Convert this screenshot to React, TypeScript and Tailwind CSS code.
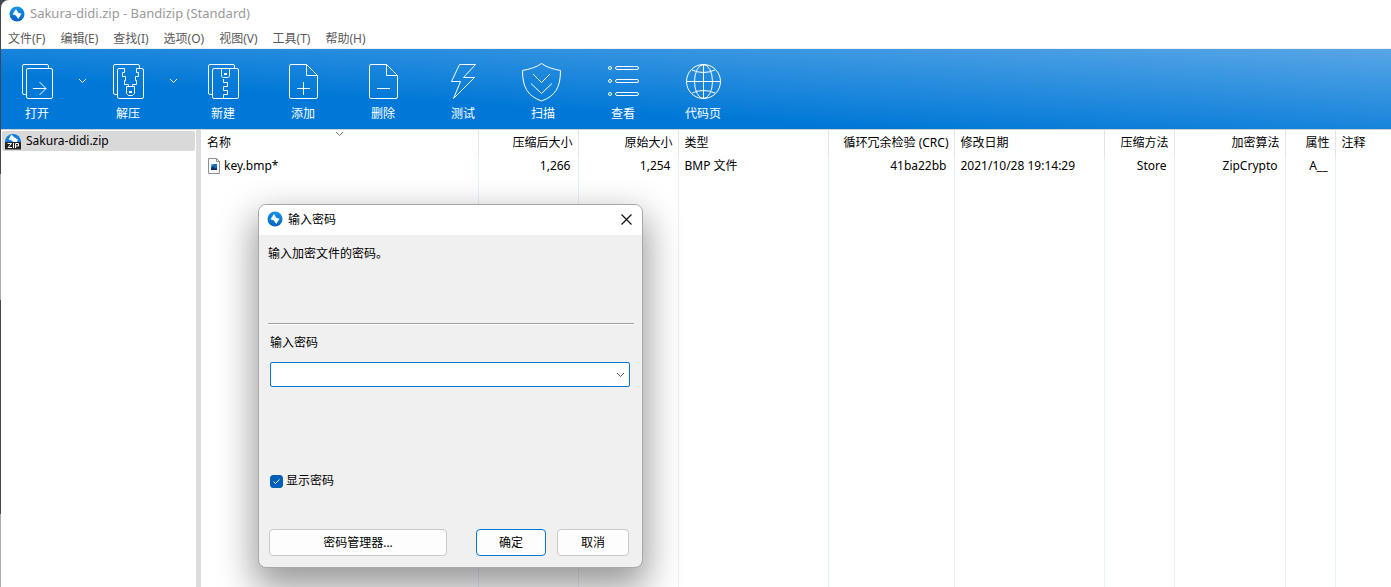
import { useState } from 'react'
import type { ReactNode } from 'react'
import clsx from 'clsx'

const menus = ['文件(F)', '编辑(E)', '查找(I)', '选项(O)', '视图(V)', '工具(T)', '帮助(H)']

const columns = [
  { name: '名称', value: 'key.bmp*', width: 'w-[277px]' },
  { name: '压缩后大小', value: '1,266', width: 'w-[100px]', right: true },
  { name: '原始大小', value: '1,254', width: 'w-[100px]', right: true },
  { name: '类型', value: 'BMP 文件', width: 'w-[150px]' },
  { name: '循环冗余检验 (CRC)', value: '41ba22bb', width: 'w-[126px]', right: true },
  { name: '修改日期', value: '2021/10/28 19:14:29', width: 'w-[150px]' },
  { name: '压缩方法', value: 'Store', width: 'w-[70px]', right: true },
  { name: '加密算法', value: 'ZipCrypto', width: 'w-[111px]', right: true },
  { name: '属性', value: 'A__', width: 'w-[50px]', right: true },
  { name: '注释', value: '', width: '' },
]

const pages = 'M9.5 32.5H7a1.5 1.5 0 0 1-1.5-1.5V4A1.5 1.5 0 0 1 7 2.5H30A1.5 1.5 0 0 1 31.5 4V6.5'
const sheet = 'M23.5 2.5H8A1.5 1.5 0 0 0 6.5 4V35A1.5 1.5 0 0 0 8 36.5H33A1.5 1.5 0 0 0 34.5 35V13.5L23.5 2.5V13.5H34.5'

const tools: { label: string; menu?: boolean; icon: ReactNode }[] = [
  {
    label: '打开',
    menu: true,
    icon: (
      <>
        <path d={pages} />
        <rect x="9.5" y="6.5" width="26" height="30" rx="1.5" />
        <path d="M16 26.5H29M22.5 20L29 26.5L22.5 33" />
      </>
    ),
  },
  {
    label: '解压',
    menu: true,
    icon: (
      <>
        <path d={pages} />
        <path d="M20.5 24.5V22.5H16.5V18.5H17.5V14.5H14.5V10.5H16.5V6.5H11A1.5 1.5 0 0 0 9.5 8V35A1.5 1.5 0 0 0 11 36.5H34A1.5 1.5 0 0 0 35.5 35V8A1.5 1.5 0 0 0 34 6.5H28.5V10.5H30.5V14.5H27.5V18.5H28.5V22.5H24.5V24.5" />
        <path d="M18.5 24.5H26.5V31.5L24.5 33.5H20.5L18.5 31.5Z" />
        <rect x="21.5" y="29.5" width="2" height="1" />
      </>
    ),
  },
  {
    label: '新建',
    icon: (
      <>
        <path d={pages} />
        <rect x="9.5" y="6.5" width="26" height="30" rx="1.5" />
        <path d="M18.5 6.5V13A2 2 0 0 0 20.5 15.5H24.5A2 2 0 0 0 26.5 13V6.5" />
        <rect x="21.5" y="11.5" width="2" height="1" />
        <path d="M20.5 17V20.5H24.5V24.5H20.5V28.5H24.5V32.5H20.5V36.5" />
      </>
    ),
  },
  {
    label: '添加',
    icon: (
      <>
        <path d={sheet} />
        <path d="M14 26.5H27M20.5 20V33" />
      </>
    ),
  },
  {
    label: '删除',
    icon: (
      <>
        <path d={sheet} />
        <path d="M14 26.5H27" />
      </>
    ),
  },
  { label: '测试', icon: <path d="M16.5 2.5H32.5L20.5 15.5H31.5L10.5 36.5L17.5 19.5H8.5Z" /> },
  {
    label: '扫描',
    icon: (
      <>
        <path d="M18.5 1.5C13 5.5 7 7 -.5 8.5C-.5 26 5 34 18.5 39C32 34 37.5 26 37.5 8.5C30 7 24 5.5 18.5 1.5Z" />
        <path d="M10 12L18.5 20.5L27 12M8 21.5L18.5 31.5L29 21.5" />
      </>
    ),
  },
  {
    label: '查看',
    icon: (
      <>
        {[6, 19, 32].map((y) => (
          <g key={y}>
            <circle cx="7" cy={y} r="1.5" />
            <rect x="12.5" y={y - 1.5} width="23" height="3" rx="1.5" />
          </g>
        ))}
      </>
    ),
  },
  {
    label: '代码页',
    icon: (
      <>
        <circle cx="20.5" cy="19.5" r="17" />
        <ellipse cx="20.5" cy="19.5" rx="9" ry="17" />
        <path d="M20.5 2.5V36.5M3.5 19.5H37.5M9 8Q20.5 13 32 8M9 31Q20.5 26 32 31" />
      </>
    ),
  },
]

function Chevron({ className }: { className?: string }) {
  return (
    <svg viewBox="0 0 9 6" className={clsx('w-[9px] h-1.5', className)} fill="none" stroke="currentColor">
      <path d="M1 1L4.5 4.5L8 1" />
    </svg>
  )
}

function BandizipLogo() {
  return (
    <svg viewBox="0 0 16 16" className="w-4 h-4">
      <defs>
        <linearGradient id="logo" x1="0" y1="0" x2="0" y2="1">
          <stop offset="0" stopColor="#1596e8" />
          <stop offset="1" stopColor="#0560c8" />
        </linearGradient>
      </defs>
      <circle cx="8" cy="8" r="7.5" fill="url(#logo)" />
      <path d="M7 3L9.2 6.8L12.5 7.8L9.2 13L7 9.4L3.5 8.2Z" fill="#fff" />
    </svg>
  )
}

function ZipIcon() {
  return (
    <svg viewBox="0 0 16 17" className="w-4 h-[17px]">
      <path d="M0 9a8 8 0 0 1 16 0Z" fill="#0a7fe0" />
      <path d="M6.5 1.5L9.5 4.5L13 6.5L12 9H8L7 7.5L3.5 6.5Z" fill="#fff" />
      <rect y="9" width="16" height="7.5" rx="0.5" fill="#222" />
      <path d="M2.5 10.5H6.5L3 14.5H7M8.5 10V15M10.5 15V10.5H13.5V13H10.5" fill="none" stroke="#fff" />
    </svg>
  )
}

function BmpIcon() {
  return (
    <svg viewBox="0 0 12 16" className="w-3 h-4">
      <path d="M.5 .5H8.5L11.5 3.5V15.5H.5Z" fill="#f8f8f8" stroke="#8f8f8f" />
      <path d="M8.5 .5V3.5H11.5" fill="none" stroke="#8f8f8f" />
      <rect x="3" y="6" width="6" height="6" fill="#1668b8" />
      <path d="M3 12V10L5 8.5L7 10.5L9 9.5V12Z" fill="#0a2f66" />
      <path d="M3 6H6L3 9Z" fill="#4bb0ea" />
    </svg>
  )
}

function Toolbar() {
  return (
    <div
      role="toolbar"
      className="flex h-20 shrink-0 text-white bg-[linear-gradient(to_top_right,#0078d7_32%,#58a6e6)]"
    >
      {tools.map((tool) => (
        <div key={tool.label} className="flex">
          <button
            type="button"
            className={clsx('flex flex-col items-center pt-[13px] gap-0.5', tool.menu ? 'w-[72px]' : 'w-20')}
          >
            <svg viewBox="0 0 40 40" className="w-10 h-10 overflow-visible" fill="none" stroke="currentColor">
              {tool.icon}
            </svg>
            <span className="leading-5">{tool.label}</span>
          </button>
          {tool.menu && (
            <button type="button" aria-label={`${tool.label}菜单`} className="w-[19px] flex justify-center pt-[29px]">
              <Chevron />
            </button>
          )}
        </div>
      ))}
    </div>
  )
}

function FileList() {
  return (
    <table className="flex-1 h-full table-fixed border-collapse whitespace-nowrap">
      <thead>
        <tr className="h-[26px]">
          {columns.map((col, i) => (
            <th
              key={col.name}
              className={clsx(
                'relative p-0 font-normal leading-5 border-[#e5e5e5]',
                col.width,
                col.right ? 'text-right pr-[5px]' : 'text-left pl-1.5',
                i < columns.length - 1 && 'border-r'
              )}
            >
              {col.name}
              {i === 0 && <Chevron className="absolute top-px left-1/2 -ml-1 text-gray-500" />}
            </th>
          ))}
        </tr>
      </thead>
      <tbody>
        <tr className="h-5">
          {columns.map((col, i) => (
            <td
              key={col.name}
              className={clsx(
                'p-0 leading-5 border-[#e6f0fb]',
                col.right ? 'text-right pr-[7px]' : 'text-left pl-1.5',
                i < columns.length - 1 && 'border-r'
              )}
            >
              {i === 0 ? (
                <span className="flex items-center gap-1 pl-px">
                  <BmpIcon />
                  {col.value}
                </span>
              ) : (
                col.value
              )}
            </td>
          ))}
        </tr>
        <tr>
          {columns.map((col, i) => (
            <td key={col.name} className={clsx('p-0 border-[#e6f0fb]', i < columns.length - 1 && 'border-r')} />
          ))}
        </tr>
      </tbody>
    </table>
  )
}

function PasswordDialog() {
  const [password, setPassword] = useState('')
  const [visible, setVisible] = useState(true)

  return (
    <div
      role="dialog"
      aria-labelledby="dialog-title"
      className="absolute left-[258px] top-[204px] w-[385px] rounded-lg border border-[#a8a8a8] bg-[#f0f0f0] overflow-hidden shadow-[0_16px_36px_4px_rgba(0,0,0,0.4)]"
    >
      <div className="flex items-center h-[30px] pl-2 pr-2.5 pb-0.5 bg-white">
        <BandizipLogo />
        <h2 id="dialog-title" className="pl-[5px] pt-px flex-1">
          输入密码
        </h2>
        <button type="button" aria-label="关闭">
          <svg viewBox="0 0 11 11" className="w-[11px] h-[11px]" stroke="#111" strokeWidth="1.2">
            <path d="M.5 .5L10.5 10.5M10.5 .5L.5 10.5" />
          </svg>
        </button>
      </div>

      <form className="pl-[9px] pr-2 pt-[9px] pb-[11px]" onSubmit={(e) => e.preventDefault()}>
        <p className="leading-5">输入加密文件的密码。</p>
        <hr className="mt-[59px] border-t border-b border-t-[#a0a0a0] border-b-white" />

        <label htmlFor="password" className="block mt-2 pl-0.5 leading-5">
          输入密码
        </label>
        <div className="flex items-center h-[25px] mt-[9px] ml-0.5 mr-1 pr-1 rounded-xs border border-[#0078d4] bg-white">
          <input
            id="password"
            type={visible ? 'text' : 'password'}
            value={password}
            onChange={(e) => setPassword(e.target.value)}
            className="flex-1 px-1 outline-none"
          />
          <button type="button" aria-label="历史密码">
            <Chevron className="text-gray-600" />
          </button>
        </div>

        <label className="flex items-center gap-[3px] mt-[84px] pl-0.5 leading-5">
          <span className="relative w-[13px] h-[13px]">
            <input
              type="checkbox"
              checked={visible}
              onChange={(e) => setVisible(e.target.checked)}
              className="block appearance-none w-[13px] h-[13px] rounded-[3px] border border-[#005fb8] checked:bg-[#005fb8]"
            />
            <svg
              viewBox="0 0 13 13"
              className="absolute inset-0 pointer-events-none"
              fill="none"
              stroke={visible ? '#fff' : 'none'}
            >
              <path d="M3.5 6.5L5.5 8.5L9.5 4.5" />
            </svg>
          </span>
          显示密码
        </label>

        <div className="flex mt-[38px] pl-px pr-[5px]">
          <button type="button" className="w-[178px] h-[27px] rounded border border-[#c8c8c8] bg-[#fdfdfd]">
            密码管理器...
          </button>
          <button type="submit" className="w-[70px] h-[27px] ml-auto rounded border border-[#0078d4] bg-[#fdfdfd]">
            确定
          </button>
          <button type="button" className="w-[72px] h-[27px] ml-[11px] rounded border border-[#c8c8c8] bg-[#fdfdfd]">
            取消
          </button>
        </div>
      </form>
    </div>
  )
}

export default function App() {
  return (
    <div className="relative flex h-screen overflow-hidden bg-[#414754] text-xs text-black font-['Noto_Sans','Noto_Sans_CJK_SC',sans-serif]">
      {/* sliver of the desktop to the left of the window */}
      <div className="w-px shrink-0 bg-[linear-gradient(#414754_174px,#ababab_174px_300px,#414754_300px_514px,#ababab_514px)]" />

      <div className="flex flex-col flex-1 min-w-0 rounded-tl-lg bg-white">
        <header className="flex items-center h-7 pl-2 pb-px gap-[5px]">
          <BandizipLogo />
          <h1 className="text-[13px] text-[#999]">Sakura-didi.zip - Bandizip (Standard)</h1>
        </header>

        <nav className="flex h-[21px] pl-[7px] gap-[15px] text-[#5a5a5a] border-b border-[#f0f0f0]">
          {menus.map((menu) => (
            <button key={menu} type="button" className="leading-5 pt-px">
              {menu}
            </button>
          ))}
        </nav>

        <Toolbar />

        <main className="flex flex-1 min-h-0 border-t border-[#d0d0d0]">
          <aside className="w-[195px] shrink-0 p-px">
            <button type="button" className="flex items-center w-full h-5 pl-[3px] gap-[5px] rounded-xs bg-[#d9d9d9]">
              <ZipIcon />
              Sakura-didi.zip
            </button>
          </aside>
          <div className="w-[5px] shrink-0 bg-[#dcdcdc]" />
          <FileList />
        </main>
      </div>

      <PasswordDialog />
    </div>
  )
}
